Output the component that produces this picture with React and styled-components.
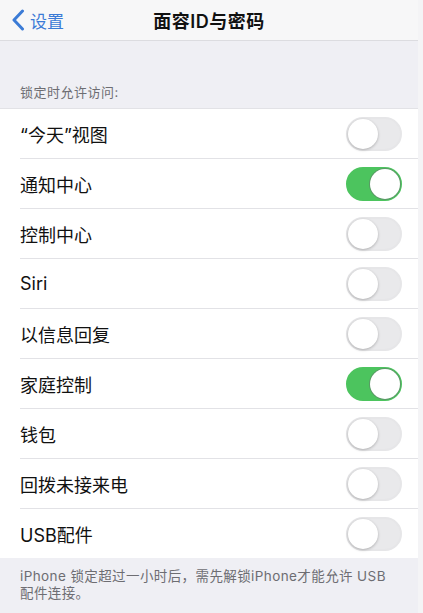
import React, { useState } from 'react'
import styled, { createGlobalStyle } from 'styled-components'

const GlobalStyle = createGlobalStyle`
	html, body {
		margin: 0;
		padding: 0;
		background: #efeff4;
	}
	body {
		font-family: Inter, "Noto Sans CJK SC", sans-serif;
		-webkit-font-smoothing: antialiased;
	}
`

const Screen = styled.div`
	width: 423px;
	height: 613px;
	display: flex;
	overflow: hidden;
	background: #f4f4f6;
`

const Main = styled.div`
	width: 418px;
	display: flex;
	flex-direction: column;
	background: #efeff4;
`

const NavBar = styled.header`
	height: 40px;
	display: grid;
	grid-template-columns: 90px 1fr 90px;
	align-items: center;
	background: #f7f7f8;
	border-bottom: 1px solid #dcdce0;
`

const Back = styled.div`
	display: flex;
	align-items: center;
	gap: 5px;
	padding-left: 11px;
	color: #3b7bd6;
	font-size: 17px;
	svg{
		width: 14px;
		height: 22px;
	}
`

const Title = styled.h1`
	margin: 0;
	text-align: center;
	font-size: 18px;
	font-weight: 600;
	color: #111;
	letter-spacing: 0.5px;
`

const SectionHeader = styled.div`
	padding: 41px 20px 7px;
	font-size: 13px;
	color: #6d6d72;
	letter-spacing: 0.5px;
`

const List = styled.ul`
	margin: 0;
	padding: 0 0 0 20px;
	list-style: none;
	background: #fff;
	border-top: 1px solid #e2e2e6;
`

const Row = styled.li`
	height: 49px;
	display: flex;
	align-items: center;
	justify-content: space-between;
	padding-right: 16px;
	border-bottom: ${p => (p.$last ? 'none' : '1px solid #e2e2e6')};
`

const Label = styled.span`
	font-size: 18px;
	color: #111;
`

const Switch = styled.button`
	position: relative;
	width: 56px;
	height: 34px;
	padding: 0;
	border-radius: 17px;
	cursor: pointer;
	border: 2px solid ${p => (p.$on ? '#4cc45e' : '#e6e6e8')};
	background: ${p => (p.$on ? '#4cc45e' : '#e9e9eb')};
	box-sizing: border-box;
	&::after{
		content: '';
		position: absolute;
		top: 0;
		left: ${p => (p.$on ? '22px' : '0')};
		width: 30px;
		height: 30px;
		border-radius: 50%;
		background: #fff;
		box-shadow: ${p => (p.$on ? '0 0 0 1px #5a9a66' : '0 1px 3px rgba(0,0,0,.25)')};
	}
`

const Footer = styled.p`
	margin: 0;
	padding: 10px 22px 0 20px;
	font-size: 13.5px;
	line-height: 17px;
	color: #6d6d72;
	letter-spacing: 0.4px;
`

const items = [
	{ label: '“今天”视图', on: false },
	{ label: '通知中心', on: true },
	{ label: '控制中心', on: false },
	{ label: 'Siri', on: false },
	{ label: '以信息回复', on: false },
	{ label: '家庭控制', on: true },
	{ label: '钱包', on: false },
	{ label: '回拨未接来电', on: false },
	{ label: 'USB配件', on: false }
]

function App() {
	const [state, setState] = useState(items.map(i => i.on))
	const toggle = idx => setState(s => s.map((v, i) => (i === idx ? !v : v)))

	return (
		<Screen>
			<GlobalStyle />
			<Main>
				<NavBar>
					<Back>
						<svg viewBox='0 0 14 22' fill='none'>
							<path d='M11.5 2 L3 11 L11.5 20' stroke='#3b7bd6' strokeWidth='3' strokeLinecap='round' strokeLinejoin='round' />
						</svg>
						设置
					</Back>
					<Title>面容ID与密码</Title>
					<div />
				</NavBar>
				<SectionHeader>锁定时允许访问:</SectionHeader>
				<List>
					{items.map((item, i) => (
						<Row key={item.label} $last={i === items.length - 1}>
							<Label>{item.label}</Label>
							<Switch $on={state[i]} onClick={() => toggle(i)} aria-label={item.label} />
						</Row>
					))}
				</List>
				<Footer>iPhone 锁定超过一小时后，需先解锁iPhone才能允许 USB 配件连接。</Footer>
			</Main>
		</Screen>
	)
}

export default App
